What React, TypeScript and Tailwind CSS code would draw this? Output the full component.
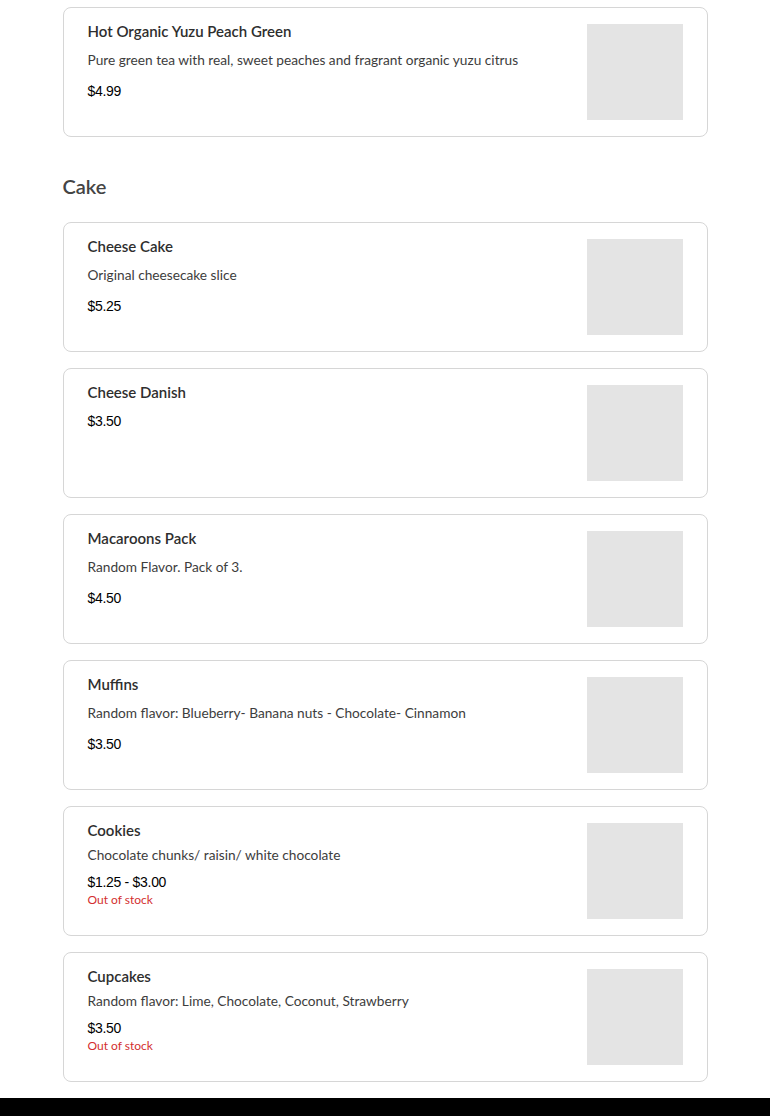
type Item = {
  name: string;
  desc?: string;
  price: string;
  outOfStock?: boolean;
};

const drinks: Item[] = [
  {
    name: "Hot Organic Yuzu Peach Green",
    desc: "Pure green tea with real, sweet peaches and fragrant organic yuzu citrus",
    price: "$4.99",
  },
];

const cakes: Item[] = [
  { name: "Cheese Cake", desc: "Original cheesecake slice", price: "$5.25" },
  { name: "Cheese Danish", price: "$3.50" },
  { name: "Macaroons Pack", desc: "Random Flavor. Pack of 3.", price: "$4.50" },
  {
    name: "Muffins",
    desc: "Random flavor: Blueberry- Banana nuts - Chocolate- Cinnamon",
    price: "$3.50",
  },
  {
    name: "Cookies",
    desc: "Chocolate chunks/ raisin/ white chocolate",
    price: "$1.25 - $3.00",
    outOfStock: true,
  },
  {
    name: "Cupcakes",
    desc: "Random flavor: Lime, Chocolate, Coconut, Strawberry",
    price: "$3.50",
    outOfStock: true,
  },
];

function ItemCard({ item }: { item: Item }) {
  const tight = item.outOfStock;
  return (
    <div className="flex rounded-lg border border-[#d6d6d6] bg-white px-6 py-4">
      <div className="min-w-0 flex-1">
        <h3 className="text-[15px] font-semibold leading-[14px] text-[#2e2e2e]">
          {item.name}
        </h3>
        {item.desc && (
          <p
            className={`${tight ? "mt-2" : "mt-3"} text-[13.7px] leading-5 text-[#3d3d3d]`}
          >
            {item.desc}
          </p>
        )}
        <p
          className={`${
            item.desc ? (tight ? "mt-[7px]" : "mt-[11px]") : "mt-3"
          } font-['Liberation_Sans',Arial,sans-serif] text-[14px] leading-5 tracking-[-0.3px] text-black`}
        >
          {item.price}
        </p>
        {item.outOfStock && (
          <p className="text-[12px] leading-4 text-[#d32f2f]">Out of stock</p>
        )}
      </div>
      <div className="ml-4 h-24 w-24 shrink-0 bg-[#e4e4e4]" />
    </div>
  );
}

export default function App() {
  return (
    <div className="min-h-screen bg-white font-['Lato','Open_Sans',sans-serif]">
      <div className="mx-auto w-[645px] pt-[7px] pb-4">
        <div className="flex flex-col gap-4">
          {drinks.map((item) => (
            <ItemCard key={item.name} item={item} />
          ))}
        </div>

        <h2 className="mt-[35px] mb-[22px] text-[20px] font-semibold leading-7 text-[#444]">
          Cake
        </h2>
        <div className="flex flex-col gap-4">
          {cakes.map((item) => (
            <ItemCard key={item.name} item={item} />
          ))}
        </div>
      </div>
      <footer className="h-[18px] bg-black" />
    </div>
  );
}
